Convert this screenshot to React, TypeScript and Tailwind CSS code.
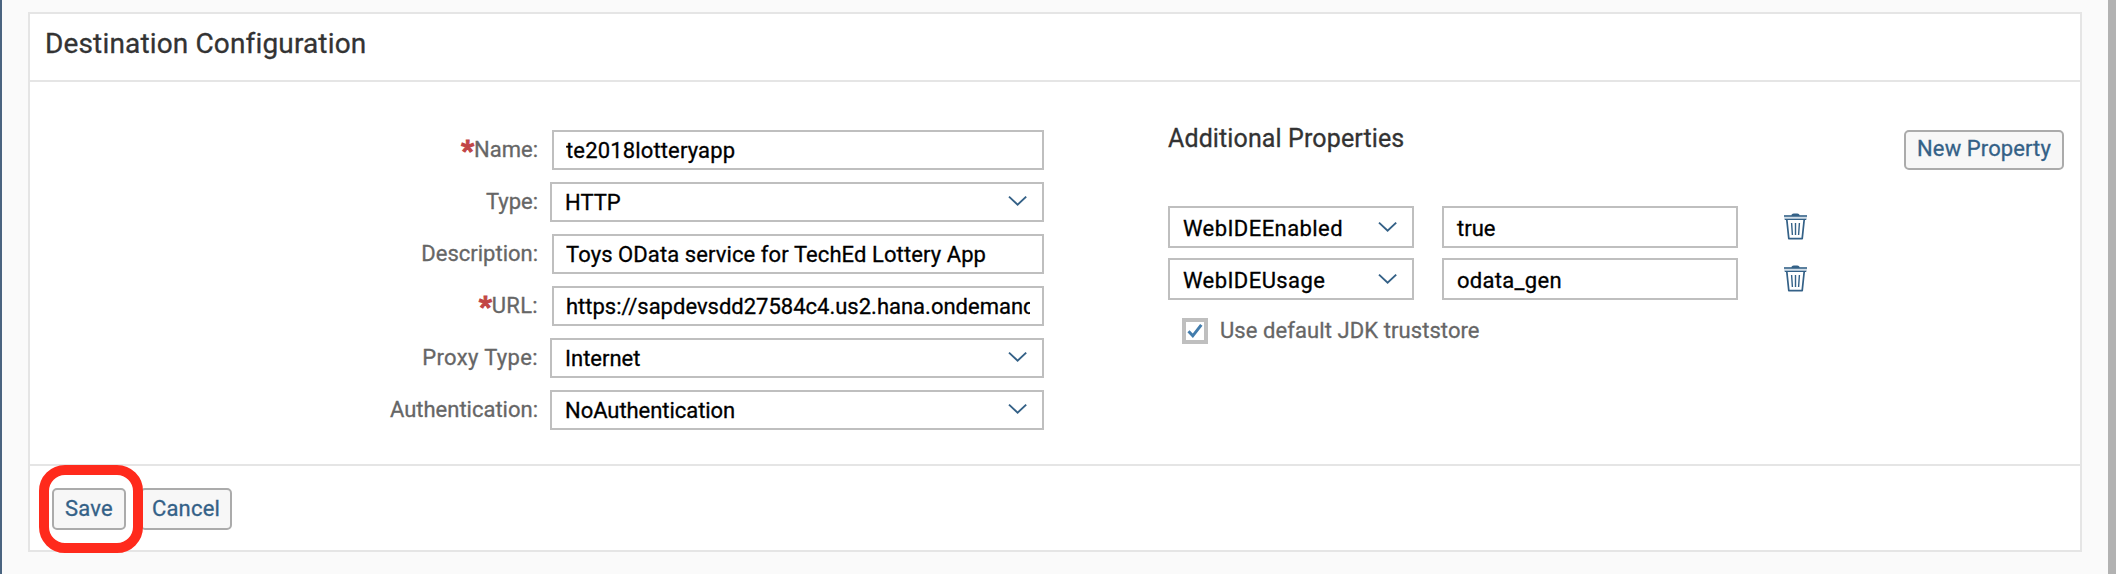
import type { ReactNode } from 'react';

function Chevron() {
  return (
    <svg width="20" height="12" viewBox="0 0 20 12" fill="none" className="shrink-0">
      <path d="M2 1.6L10.6 9.8L19.2 1.6" stroke="#346187" strokeWidth="1.9" />
    </svg>
  );
}

function Trash() {
  return (
    <svg width="24" height="28" viewBox="0 0 24 28" fill="none" stroke="#346187" className="shrink-0">
      <rect x="0" y="2" width="23" height="4.5" fill="#d3dfe9" stroke="none" />
      <path d="M7.5 2C7.8 0.7 9 0.6 11.5 0.6S15.2 0.7 15.5 2V3H7.5Z" fill="#346187" stroke="none" />
      <path d="M0 3H23M0.8 6.4H22.2" strokeWidth="1.4" />
      <path d="M2.8 6.6L4.8 25.6H18.2L20.2 6.6" strokeWidth="1.7" strokeLinejoin="round" />
      <path d="M7.6 10L8.4 22M11.5 10V22M15.4 10L14.6 22" strokeWidth="1.4" />
    </svg>
  );
}

function Label({ children, required }: { children: ReactNode; required?: boolean }) {
  return (
    <div className="flex w-[508px] shrink-0 justify-end text-[#666666]">
      {required && (
        <span className="h-[26px] text-[28px] leading-[28px] font-black text-[#c14646] [-webkit-text-stroke:1px_#c14646]">*</span>
      )}
      {children}
    </div>
  );
}

function Row({ label, required, select, children }: { label: ReactNode; required?: boolean; select?: boolean; children: ReactNode }) {
  return (
    <div className="flex h-10 items-center">
      <Label required={required}>{label}</Label>
      {select ? (
        <div className="ml-3 flex h-10 w-[494px] items-center justify-between border-2 border-[#bfbfbf] bg-white pl-[13px] pr-[15px] text-black">
          <span className="pt-px">{children}</span>
          <div className="flex pb-0.5">
            <Chevron />
          </div>
        </div>
      ) : (
        <div className="ml-3.5 flex h-10 w-[492px] items-center border-2 border-[#bfbfbf] bg-white px-3 pt-px text-black">
          <div className="w-full overflow-hidden">{children}</div>
        </div>
      )}
    </div>
  );
}

function Property({ name, value }: { name: ReactNode; value: ReactNode }) {
  return (
    <div className="flex h-[42px] items-center">
      <div className="flex h-[42px] w-[246px] items-center justify-between border-2 border-[#bfbfbf] bg-white pl-[13px] pr-[15px] text-black">
        <span className="pt-[3px] tracking-[0.42px]">{name}</span>
        <Chevron />
      </div>
      <div className="ml-7 flex h-[42px] w-[296px] items-center border-2 border-[#bfbfbf] bg-white px-[13px] pt-[3px] text-black">{value}</div>
      <div className="ml-[46px]">
        <Trash />
      </div>
    </div>
  );
}

export default function App() {
  return (
    <div className="flex h-[574px] w-[2116px] overflow-hidden bg-[#fafafa] font-['Roboto',sans-serif] text-[22px] leading-[26px] whitespace-nowrap [-webkit-text-stroke:0.3px]">
      <div className="w-0.5 bg-[#4a6480]" />
      <div className="flex-1 pl-[26px] pt-3">
        <div className="flex h-[540px] w-[2054px] flex-col border-2 border-[#e5e5e5] bg-white">
          <header className="flex h-[68px] items-center border-b-2 border-[#e5e5e5] pl-[15px] pb-1.5 text-[28px] tracking-[0.15px] text-[#333333]">
            <h1>Destination Configuration</h1>
          </header>
          <main className="flex h-[384px] border-b-2 border-[#e5e5e5] pt-12">
            <section className="flex flex-col gap-3">
              <Row label="Name:" required><span className="tracking-[0.15px]">te2018lotteryapp</span></Row>
              <Row label="Type:" select>HTTP</Row>
              <Row label="Description:"><span className="tracking-[0.09px]">Toys OData service for TechEd Lottery App</span></Row>
              <Row label={<span className="tracking-[0.3px]">URL:</span>} required>https://sapdevsdd27584c4.us2.hana.ondemand.com</Row>
              <Row label={<span className="tracking-[0.35px]">Proxy Type:</span>} select>Internet</Row>
              <Row label="Authentication:" select><span className="tracking-[-0.05px]">NoAuthentication</span></Row>
            </section>
            <section className="ml-[124px] w-[896px]">
              <div className="flex h-[76px] items-start justify-between">
                <h2 className="text-[25px] leading-[18px] tracking-[0.12px] text-[#333333]">Additional Properties</h2>
                <button className="flex h-10 w-40 items-center justify-center rounded-[5px] border-2 border-[#ababab] bg-[#f7f7f7] pb-[3px] tracking-[0.1px] text-[#346187]">New Property</button>
              </div>
              <div className="flex flex-col gap-2.5">
                <Property name="WebIDEEnabled" value="true" />
                <Property name="WebIDEUsage" value={<span className="tracking-[0.3px]">odata_gen</span>} />
              </div>
              <div className="mt-[18px] flex items-center pl-3.5">
                <div className="flex size-[26px] items-center justify-center border-4 border-[#bfbfbf] bg-white">
                  <svg width="16" height="16" viewBox="0 0 16 16" fill="none">
                    <path d="M1.5 8.2L5.8 12.8L14.3 1.8" stroke="#427cac" strokeWidth="3" />
                  </svg>
                </div>
                <span className="ml-3 tracking-[0.08px] text-[#666666]">Use default JDK truststore</span>
              </div>
            </section>
          </main>
          <footer className="relative flex pl-[22px] pt-[22px]">
            <button className="flex h-[42px] w-[74px] items-center justify-center rounded-[5px] border-2 border-[#ababab] bg-[#f7f7f7] pb-px tracking-[0.2px] text-[#346187]">Save</button>
            <button className="ml-3.5 flex h-[42px] w-[92px] items-center justify-center rounded-[5px] border-2 border-[#ababab] bg-[#f7f7f7] pb-px tracking-[0.2px] text-[#346187]">Cancel</button>
            <div className="absolute left-[9px] top-[-1px] h-[88px] w-[104px] rounded-[26px] border-10 border-[#ff2a1c]" />
          </footer>
        </div>
      </div>
      <div className="w-2 bg-[#b2b2b2]" />
    </div>
  );
}
